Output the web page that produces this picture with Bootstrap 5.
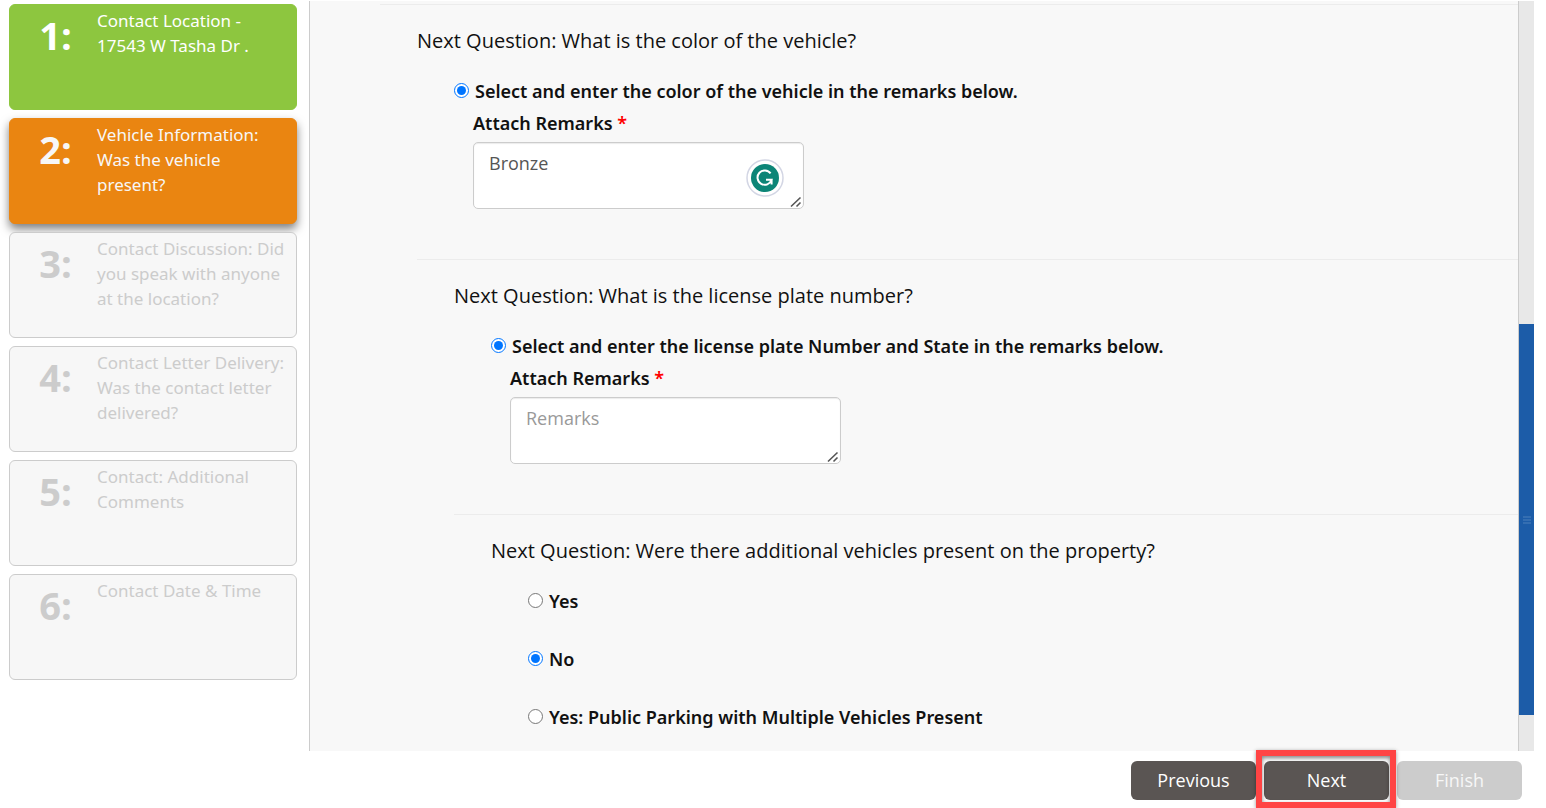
<!DOCTYPE html>
<html lang="en">
<head>
<meta charset="utf-8">
<meta name="viewport" content="width=device-width, initial-scale=1">
<title>Contact Questionnaire</title>
<link href="https://cdn.jsdelivr.net/npm/bootstrap@5.3.0/dist/css/bootstrap.min.css" rel="stylesheet">
<style>
body { font-family: "Open Sans", "Noto Sans", sans-serif; color: #111; background: #fff; }
.steps { flex: 0 0 309px; padding: 4px 12px 8px 9px; gap: 8px; }
.step { height: 106px; border: 1px solid #ccc; border-radius: 6px; background: #f7f7f7; color: #ccc; text-decoration: none; }
.step-no { flex: 0 0 87px; padding: 5px 0 0 4px; font-size: 38px; line-height: 50px; font-weight: 700; text-align: center; }
.step-title { font-family: "Noto Sans", sans-serif; font-size: 17px; line-height: 25px; padding-top: 3px; }
.step-done { background: #8dc63f; border-color: #8dc63f; color: #fff; }
.step-current { background: #ea8511; border-color: #ea8511; color: #f7f7f7; box-shadow: 0 5px 10px rgba(0,0,0,.5); }
.survey { background: #f8f8f8; border-left: 1px solid #ccc; margin-top: 1px; padding-top: 3px; overflow: hidden; padding-left: 70px; }
.nested { margin-left: 37px; }
.survey hr { margin: 0; border-top: 1px solid #ececec; opacity: 1; }
.survey h2 { font-size: 20px; line-height: 26px; font-weight: 400; margin: 0; padding: 23px 0 25px; }
.answer { padding-left: 37px; font-family: "Noto Sans", sans-serif; font-size: 18px; line-height: 25px; font-weight: 600; }
.answer input { width: 15px; height: 15px; margin: 4px 6px 0 0; flex: none; }
.remark-label { display: block; margin: 7px 0 6px 19px; }
.remark-box { margin: 0 0 50px 19px; width: 331px; }
.remark-box textarea { height: 67px; padding: 8px 15px; font-family: "Open Sans", sans-serif; font-size: 18px; line-height: 25px; color: #555; border: 1px solid #ccc; border-radius: 5px; background: #fff; box-shadow: inset 0 1px 1px rgba(0,0,0,.08); }
.remark-box textarea::placeholder { color: #999; opacity: 1; }
.remark-box textarea::-webkit-resizer { background: url("data:image/svg+xml,%3Csvg xmlns='http://www.w3.org/2000/svg' width='15' height='15'%3E%3Cpath d='M3 13.5L12.5 4.5M8.5 13.5L12.5 9.5' stroke='%23555' stroke-width='1.6'/%3E%3C/svg%3E") no-repeat right bottom; }
.required { color: red; }
.helper { right: 20px; top: 17px; width: 38px; height: 38px; }
.options { gap: 33px; }
.rail { flex: 0 0 16px; margin: 1px 12px 0 0; border-left: 1px solid #ccc; background: #e8e8e8; }
.rail-thumb { background: #1c5ca8; }
.footer-bar { padding: 10px 24px 8px 0; gap: 8px; }
.footer-bar .btn { width: 125px; height: 39px; border: 0; border-radius: 6px; padding: 0; font-size: 18px; line-height: 25px; background: #5a5553; color: #fff; }
.footer-bar .btn:disabled { background: #ccc; color: #f7f7f7; opacity: 1; }
.callout { inset: -11px -7px -8px -8px; border: 6px solid #ff4444; box-shadow: 0 1px 4px rgba(0,0,0,.4), inset 0 2px 4px rgba(0,0,0,.5); pointer-events: none; }
</style>
</head>
<body>
<div class="d-flex flex-column vh-100 overflow-hidden">
  <div class="d-flex flex-grow-1 overflow-hidden">
    <nav class="steps d-flex flex-column" aria-label="Steps">
      <a href="#" class="step step-done d-flex"><span class="step-no">1:</span><span class="step-title">Contact Location -<br>17543 W Tasha Dr .</span></a>
      <a href="#" class="step step-current d-flex"><span class="step-no">2:</span><span class="step-title">Vehicle Information:<br>Was the vehicle<br>present?</span></a>
      <a href="#" class="step d-flex"><span class="step-no">3:</span><span class="step-title">Contact Discussion: Did<br>you speak with anyone<br>at the location?</span></a>
      <a href="#" class="step d-flex"><span class="step-no">4:</span><span class="step-title">Contact Letter Delivery:<br>Was the contact letter<br>delivered?</span></a>
      <a href="#" class="step d-flex"><span class="step-no">5:</span><span class="step-title">Contact: Additional<br>Comments</span></a>
      <a href="#" class="step d-flex"><span class="step-no">6:</span><span class="step-title">Contact Date &amp; Time</span></a>
    </nav>
    <main class="survey flex-grow-1">
      <hr>
      <section class="nested">
        <h2>Next Question: What is the color of the vehicle?</h2>
        <div class="answer">
          <div class="d-flex align-items-start"><input type="radio" id="color" name="color" checked><label for="color">Select and enter the color of the vehicle in the remarks below.</label></div>
          <label class="remark-label" for="colorRemarks">Attach Remarks <span class="required">*</span></label>
          <div class="remark-box position-relative">
            <textarea class="form-control" id="colorRemarks">Bronze</textarea>
            <svg class="helper position-absolute" viewBox="0 0 38 38" aria-hidden="true"><circle cx="19" cy="19" r="18" fill="#fff" stroke="#d3d6e4" stroke-width="1.5"/><circle cx="19" cy="19" r="14" fill="#0c8577"/><path d="M24.6 14.4A7.2 7.2 0 1 0 25.6 20.8H20M25.6 20.2v5.4" fill="none" stroke="#fff" stroke-width="2"/></svg>
          </div>
        </div>
        <hr>
        <section class="nested">
          <h2>Next Question: What is the license plate number?</h2>
          <div class="answer">
            <div class="d-flex align-items-start"><input type="radio" id="plate" name="plate" checked><label for="plate">Select and enter the license plate Number and State in the remarks below.</label></div>
            <label class="remark-label" for="plateRemarks">Attach Remarks <span class="required">*</span></label>
            <div class="remark-box"><textarea class="form-control" id="plateRemarks" placeholder="Remarks"></textarea></div>
          </div>
          <hr>
          <section class="nested">
            <h2>Next Question: Were there additional vehicles present on the property?</h2>
            <div class="answer options d-flex flex-column">
              <div class="d-flex align-items-start"><input type="radio" id="more1" name="more"><label for="more1">Yes</label></div>
              <div class="d-flex align-items-start"><input type="radio" id="more2" name="more" checked><label for="more2">No</label></div>
              <div class="d-flex align-items-start"><input type="radio" id="more3" name="more"><label for="more3">Yes: Public Parking with Multiple Vehicles Present</label></div>
            </div>
          </section>
        </section>
      </section>
    </main>
    <div class="rail d-flex flex-column" aria-hidden="true">
      <div style="flex:323"></div>
      <div class="rail-thumb d-flex align-items-center justify-content-center" style="flex:391"><svg width="8" height="8" viewBox="0 0 8 8"><path d="M0 1h8M0 4h8M0 7h8" stroke="#4c80bb"/></svg></div>
      <div style="flex:36"></div>
    </div>
  </div>
  <footer class="footer-bar d-flex justify-content-end">
    <button type="button" class="btn">Previous</button>
    <div class="position-relative"><button type="button" class="btn">Next</button><div class="callout position-absolute"></div></div>
    <button type="button" class="btn" disabled>Finish</button>
  </footer>
</div>
<script src="https://cdn.jsdelivr.net/npm/bootstrap@5.3.0/dist/js/bootstrap.bundle.min.js"></script>
</body>
</html>
